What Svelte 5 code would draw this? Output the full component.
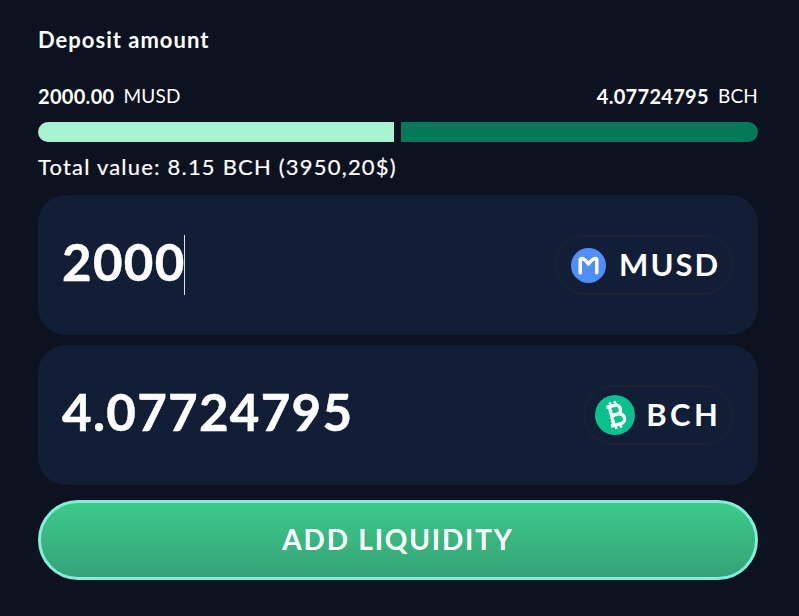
<script>
  const summary = [
    { amount: '2000.00', unit: 'MUSD' },
    { amount: '4.07724795', unit: 'BCH' }
  ];
</script>

<main class="page">
  <h1 class="title">Deposit amount</h1>
  <div class="summary">
    {#each summary as s}
      <div class="sum"><b>{s.amount}</b><span>{s.unit}</span></div>
    {/each}
  </div>
  <div class="bar">
    <div class="seg left"></div>
    <div class="seg right"></div>
  </div>
  <p class="total">Total value: 8.15 BCH (3950,20$)</p>

  <div class="card first">
    <div class="value"><span class="num">2000</span><i class="caret"></i></div>
    <div class="token">
      <svg class="icon" viewBox="0 0 36 36" aria-hidden="true">
        <circle cx="18" cy="18" r="18" fill="#4f8ff7" />
        <path d="M9.5 25.5 V12.5 Q9.5 10 12 11 Q15.5 12.5 18 16.5 Q20.5 12.5 24 11 Q26.5 10 26.5 12.5 V25.5" fill="none" stroke="#fff" stroke-width="3.6" stroke-linejoin="round" stroke-linecap="round" />
      </svg>
      <span class="sym">MUSD</span>
    </div>
  </div>

  <div class="card second">
    <div class="value"><span class="num">4.07724795</span></div>
    <div class="token">
      <svg class="icon bch" viewBox="0 0 40 40" aria-hidden="true">
        <circle cx="20" cy="20" r="20" fill="#0ac18e" />
        <g transform="rotate(-14 20 20)" fill="none" stroke="#fff" stroke-width="3.4">
          <path d="M13.5 10.5 H22 a4.6 4.6 0 0 1 0 9.3 H15 M15 19.8 H23.5 a5 5 0 0 1 0 10 H13.5 M16.5 10.5 V29.8" />
          <path d="M18 6.5 V10.5 M23 6.5 V10.5 M18 29.8 V33.8 M23 29.8 V33.8" stroke-width="2.6" />
        </g>
      </svg>
      <span class="sym">BCH</span>
    </div>
  </div>

  <button class="cta"><span>ADD LIQUIDITY</span></button>
</main>

<style>
  :global(body) {
    margin: 0;
    background: #0c121f;
  }
  .page {
    box-sizing: border-box;
    width: 799px;
    height: 616px;
    padding: 27px 41px 0 38px;
    font-family: Lato, "Liberation Sans", sans-serif;
    color: #fff;
    background: #0c121f;
    overflow: hidden;
  }
  .title {
    margin: 0;
    font-size: 22px;
    line-height: 26px;
    font-weight: 700;
    letter-spacing: 1px;
  }
  .summary {
    display: flex;
    justify-content: space-between;
    margin-top: 30px;
    font-size: 19px;
    line-height: 26px;
  }
  .sum {
    display: flex;
    gap: 9px;
  }
  .sum b {
    font-size: 20px;
    font-weight: 700;
    letter-spacing: 0.3px;
  }
  .sum span {
    letter-spacing: 0.2px;
  }
  .bar {
    display: flex;
    gap: 7px;
    height: 20px;
    margin-top: 13px;
  }
  .seg {
    height: 20px;
  }
  .left {
    width: 356px;
    background: #a8f3d0;
    border-radius: 10px 0 0 10px;
  }
  .right {
    flex: 1;
    background: #04795a;
    border-radius: 0 10px 10px 0;
  }
  .total {
    margin: 12px 0 0;
    font-size: 22px;
    line-height: 26px;
    letter-spacing: 1.2px;
    -webkit-text-stroke: 0.2px #fff;
  }
  .card {
    display: flex;
    align-items: center;
    justify-content: space-between;
    box-sizing: border-box;
    height: 140px;
    padding: 0 25px 0 24px;
    background: #121e36;
    border-radius: 28px;
  }
  .first {
    margin-top: 15px;
  }
  .second {
    margin-top: 10px;
  }
  .value {
    display: flex;
    align-items: center;
    font-size: 51px;
    font-weight: 700;
    letter-spacing: 1.3px;
    line-height: 60px;
    -webkit-text-stroke: 0.5px #fff;
  }
  .num {
    padding-bottom: 7px;
  }
  .caret {
    display: block;
    width: 1px;
    height: 60px;
    margin-left: -2px;
    background: #dfe4ea;
  }
  .token {
    display: flex;
    align-items: center;
    gap: 13px;
    box-sizing: border-box;
    height: 60px;
    padding: 0 11px 0 14px;
    border: 2px solid #1a2232;
    border-radius: 30px;
    font-size: 31px;
    font-weight: 700;
    letter-spacing: 2px;
  }
  .sym {
    padding-bottom: 3px;
  }
  .icon {
    width: 35px;
    height: 35px;
    flex: none;
  }
  .icon.bch {
    width: 40px;
    height: 40px;
  }
  .second .token {
    gap: 11px;
    padding: 0 9.5px 0 10px;
    letter-spacing: 3.5px;
  }
  .cta {
    display: block;
    box-sizing: border-box;
    width: 100%;
    height: 80px;
    margin-top: 15px;
    border: 3px solid #83efdb;
    border-radius: 40px;
    background: linear-gradient(180deg, #3ccb89 0%, #35a277 100%);
    color: #fff;
    font-family: inherit;
    font-size: 28px;
    font-weight: 700;
    letter-spacing: 1.8px;
  }
  .cta span {
    display: block;
    padding-bottom: 3px;
  }
</style>
